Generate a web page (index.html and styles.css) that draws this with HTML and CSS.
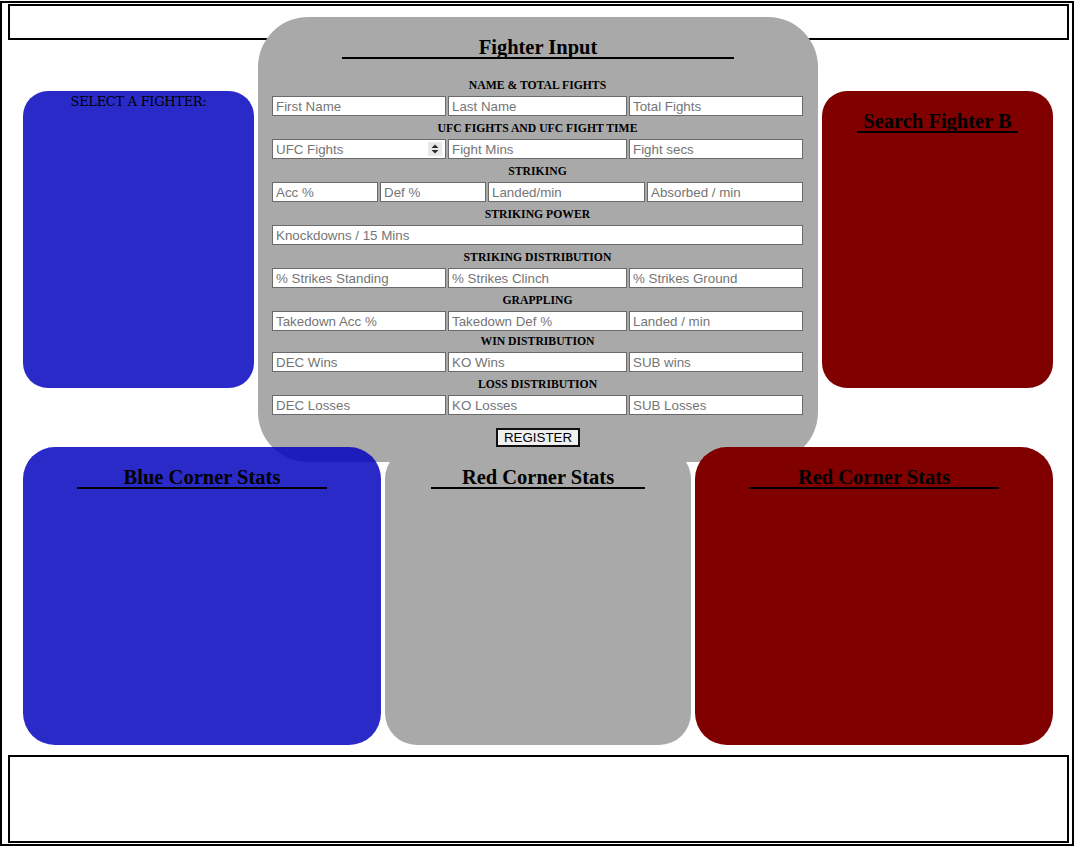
FILE: index.html
```html
<!DOCTYPE html>
<html lang="en">
<head>
<meta charset="utf-8">
<title>Fighter Input</title>
<link rel="stylesheet" href="styles.css">
</head>
<body>
<div class="page">
  <header class="topbar"></header>
  <main class="board">
    <div class="row-top">
      <section class="panel panel-blue side">
        <p class="select-label">SELECT A FIGHTER:</p>
      </section>
      <form class="panel panel-gray fighter-form">
        <h2 class="panel-title">Fighter Input</h2>
        <div class="fields">
          <div class="group-label">NAME &amp; TOTAL FIGHTS</div>
          <div class="row cols-3">
            <input class="field" type="text" placeholder="First Name">
            <input class="field" type="text" placeholder="Last Name">
            <input class="field" type="text" placeholder="Total Fights">
          </div>
          <div class="group-label">UFC FIGHTS AND UFC FIGHT TIME</div>
          <div class="row cols-3">
            <div class="num-wrap">
              <input class="field field-number" type="number" placeholder="UFC Fights">
              <span class="spin" aria-hidden="true">
                <svg width="14" height="14" viewBox="0 0 14 14">
                  <rect width="14" height="14" fill="#e9e9e9"/>
                  <polygon points="3.5,6 10.5,6 7,2.5" fill="#2a2a2a"/>
                  <polygon points="3.5,8 10.5,8 7,11.5" fill="#2a2a2a"/>
                </svg>
              </span>
            </div>
            <input class="field" type="text" placeholder="Fight Mins">
            <input class="field" type="text" placeholder="Fight secs">
          </div>
          <div class="group-label">STRIKING</div>
          <div class="row cols-4">
            <input class="field" type="text" placeholder="Acc %">
            <input class="field" type="text" placeholder="Def %">
            <input class="field" type="text" placeholder="Landed/min">
            <input class="field" type="text" placeholder="Absorbed / min">
          </div>
          <div class="group-label">STRIKING POWER</div>
          <div class="row cols-1">
            <input class="field" type="text" placeholder="Knockdowns / 15 Mins">
          </div>
          <div class="group-label">STRIKING DISTRIBUTION</div>
          <div class="row cols-3">
            <input class="field" type="text" placeholder="% Strikes Standing">
            <input class="field" type="text" placeholder="% Strikes Clinch">
            <input class="field" type="text" placeholder="% Strikes Ground">
          </div>
          <div class="group-label">GRAPPLING</div>
          <div class="row cols-3">
            <input class="field" type="text" placeholder="Takedown Acc %">
            <input class="field" type="text" placeholder="Takedown Def %">
            <input class="field" type="text" placeholder="Landed / min">
          </div>
          <div class="group-label tight">WIN DISTRIBUTION</div>
          <div class="row cols-3">
            <input class="field" type="text" placeholder="DEC Wins">
            <input class="field" type="text" placeholder="KO Wins">
            <input class="field" type="text" placeholder="SUB wins">
          </div>
          <div class="group-label">LOSS DISTRIBUTION</div>
          <div class="row cols-3">
            <input class="field" type="text" placeholder="DEC Losses">
            <input class="field" type="text" placeholder="KO Losses">
            <input class="field" type="text" placeholder="SUB Losses">
          </div>
        </div>
        <button class="register" type="button">REGISTER</button>
      </form>
      <section class="panel panel-red side">
        <h2 class="panel-title">Search Fighter B</h2>
      </section>
    </div>
    <div class="row-bottom">
      <section class="panel panel-blue stats">
        <h2 class="panel-title">Blue Corner Stats</h2>
      </section>
      <section class="panel panel-gray stats">
        <h2 class="panel-title">Red Corner Stats</h2>
      </section>
      <section class="panel panel-red stats">
        <h2 class="panel-title">Red Corner Stats</h2>
      </section>
    </div>
  </main>
  <footer class="bottombar"></footer>
</div>
</body>
</html>
```

FILE: styles.css
```css
body {
  margin: 0;
  background: #ffffff;
}

.page {
  box-sizing: border-box;
  width: 1074px;
  height: 845px;
  margin-top: 1px;
  border: 2px solid #000000;
}

.topbar {
  box-sizing: border-box;
  width: 1061px;
  height: 36px;
  margin: 1px 0 0 6px;
  border: 2px solid #000000;
}

.bottombar {
  box-sizing: border-box;
  width: 1061px;
  height: 88px;
  margin: 10px 0 0 6px;
  border: 2px solid #000000;
}

.board {
  display: flex;
  flex-direction: column;
  gap: 59px;
  width: 1030px;
  margin: 51px 0 0 21px;
}

.row-top {
  display: grid;
  grid-template-columns: 231px 560px 231px;
  column-gap: 4px;
  height: 297px;
}

.row-bottom {
  display: grid;
  grid-template-columns: 358px 306px 358px;
  column-gap: 4px;
  height: 298px;
}

.panel-blue {
  background: rgba(5, 5, 190, 0.85);
}

.panel-red {
  background: #800000;
}

.panel-gray {
  background: #a9a9a9;
}

.side {
  border-radius: 25px;
}

.stats {
  border-radius: 32px;
}

.fighter-form {
  margin: -74px 0;
  border-radius: 50px;
}

.panel-title {
  box-sizing: border-box;
  width: 70%;
  margin: 20px auto 0;
  font-family: "Liberation Serif", "Times New Roman", serif;
  font-weight: bold;
  font-size: 20.5px;
  line-height: 20px;
  text-align: center;
  color: #000000;
  border-bottom: 2px solid #000000;
}

.select-label {
  margin: 0;
  padding-top: 3px;
  font-family: "DejaVu Serif", serif;
  font-size: 13px;
  letter-spacing: -0.3px;
  text-align: center;
  color: #000000;
}

.fields {
  width: 531px;
  margin: 14px 15px 0 14px;
}

.group-label {
  padding-top: 2px;
  font-family: "Liberation Serif", "Times New Roman", serif;
  font-weight: bold;
  font-size: 11.7px;
  line-height: 21px;
  text-align: center;
  color: #000000;
}

.group-label.tight {
  padding-top: 1px;
  line-height: 20px;
}

.row {
  display: grid;
  column-gap: 2px;
}

.cols-1 {
  grid-template-columns: 531px;
}

.cols-3 {
  grid-template-columns: 174px 179px 174px;
}

.cols-4 {
  grid-template-columns: 106px 106px 157px 156px;
}

.field {
  box-sizing: border-box;
  display: block;
  width: 100%;
  height: 20px;
  margin: 0;
  padding: 1px 3px;
  font-family: "Liberation Sans", Arial, sans-serif;
  font-size: 13.333px;
  color: #000000;
  background: #ffffff;
  border: 1px solid #6a6a6a;
  border-radius: 0;
}

.field::placeholder {
  color: #757575;
}

.num-wrap {
  position: relative;
}

.field-number {
  -moz-appearance: textfield;
}

.field-number::-webkit-inner-spin-button,
.field-number::-webkit-outer-spin-button {
  -webkit-appearance: none;
  margin: 0;
}

.spin {
  position: absolute;
  top: 3px;
  right: 4px;
  width: 14px;
  height: 14px;
  line-height: 0;
}

.register {
  display: block;
  height: 19px;
  margin: 13px auto 0;
  padding: 0 6px;
  font-family: "Liberation Sans", Arial, sans-serif;
  font-size: 13.333px;
  line-height: 15px;
  color: #000000;
  background: #f0f0f0;
  border: 2px solid #111111;
  border-radius: 0;
}
```
